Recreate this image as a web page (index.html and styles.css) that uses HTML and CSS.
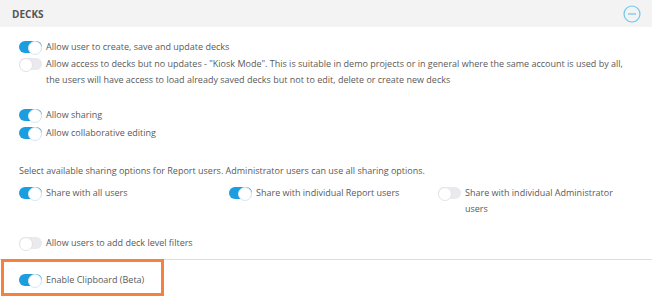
FILE: index.html
```html
<!DOCTYPE html>
<html>
<head>
<meta charset="utf-8">
<link rel="stylesheet" href="styles.css">
</head>
<body>
<div class="panel">
  <div class="panel-head">
    <span class="panel-title">DECKS</span>
    <svg class="collapse" width="18" height="18" viewBox="0 0 18 18"><circle cx="9" cy="9" r="8" fill="none" stroke="#6cc6ee" stroke-width="1.2"/><line x1="5" y1="9" x2="13" y2="9" stroke="#6cc6ee" stroke-width="1.2"/></svg>
  </div>
  <div class="panel-body">
    <div class="group">
      <div class="row"><span class="toggle on"></span><span class="label">Allow user to create, save and update decks</span></div>
      <div class="row"><span class="toggle"></span><span class="label">Allow access to decks but no updates - "Kiosk Mode". This is suitable in demo projects or in general where the same account is used by all, the users will have access to load already saved decks but not to edit, delete or create new decks</span></div>
    </div>
    <div class="group g2">
      <div class="row"><span class="toggle on"></span><span class="label">Allow sharing</span></div>
      <div class="row"><span class="toggle on"></span><span class="label">Allow collaborative editing</span></div>
    </div>
    <p class="desc">Select available sharing options for Report users. Administrator users can use all sharing options.</p>
    <div class="share">
      <div class="row"><span class="toggle on"></span><span class="label">Share with all users</span></div>
      <div class="row"><span class="toggle on"></span><span class="label">Share with individual Report users</span></div>
      <div class="row"><span class="toggle"></span><span class="label">Share with individual Administrator users</span></div>
    </div>
    <div class="group g3">
      <div class="row"><span class="toggle"></span><span class="label">Allow users to add deck level filters</span></div>
    </div>
  </div>
  <div class="panel-foot">
    <div class="highlight">
      <div class="row"><span class="toggle on"></span><span class="label">Enable Clipboard (Beta)</span></div>
    </div>
  </div>
</div>
</body>
</html>
```

FILE: styles.css
```css
* { box-sizing: border-box; }
html, body { margin: 0; padding: 0; background: #fff; }
body {
  font-family: "Open Sans", "Noto Sans", sans-serif;
  font-size: 9px;
  color: #5a5a5a;
}
.panel-head {
  height: 27px;
  background: #f3f3f3;
  display: flex;
  align-items: center;
  justify-content: space-between;
  padding: 0 11px 0 12px;
}
.panel-title {
  font-weight: 700;
  font-size: 10px;
  color: #555;
}
.collapse { display: block; }
.panel-body {
  padding: 12px 22px 8px 19px;
  border-bottom: 1px solid #ddd;
}
.group { display: flex; flex-direction: column; gap: 1px; }
.g2 { margin-top: 19px; gap: 2px; }
.row {
  display: flex;
  align-items: flex-start;
  line-height: 16px;
}
.label { flex: 1; }
.toggle {
  flex: none;
  position: relative;
  width: 23px;
  height: 12px;
  border-radius: 6px;
  background: #e9e9ee;
  margin: 2px 4px 0 0;
}
.toggle::after {
  content: "";
  position: absolute;
  top: 0;
  left: 0;
  width: 12px;
  height: 12px;
  border-radius: 50%;
  background: #fff;
  border: 1px solid #e3e3e6;
}
.toggle.on { background: #1b9ddf; }
.toggle.on::after { left: auto; right: 0; border-color: #d8e8f0; }
.desc { margin: 22px 0 6px; line-height: 16px; }
.share {
  display: grid;
  grid-template-columns: 210px 209px 180px;
}
.g3 { margin-top: 18px; }
.highlight {
  width: 163px;
  margin-left: 1px;
  margin-top: -1px;
  height: 37px;
  border: 3px solid #f5813e;
  padding: 10px 0 0 15px;
}
```
